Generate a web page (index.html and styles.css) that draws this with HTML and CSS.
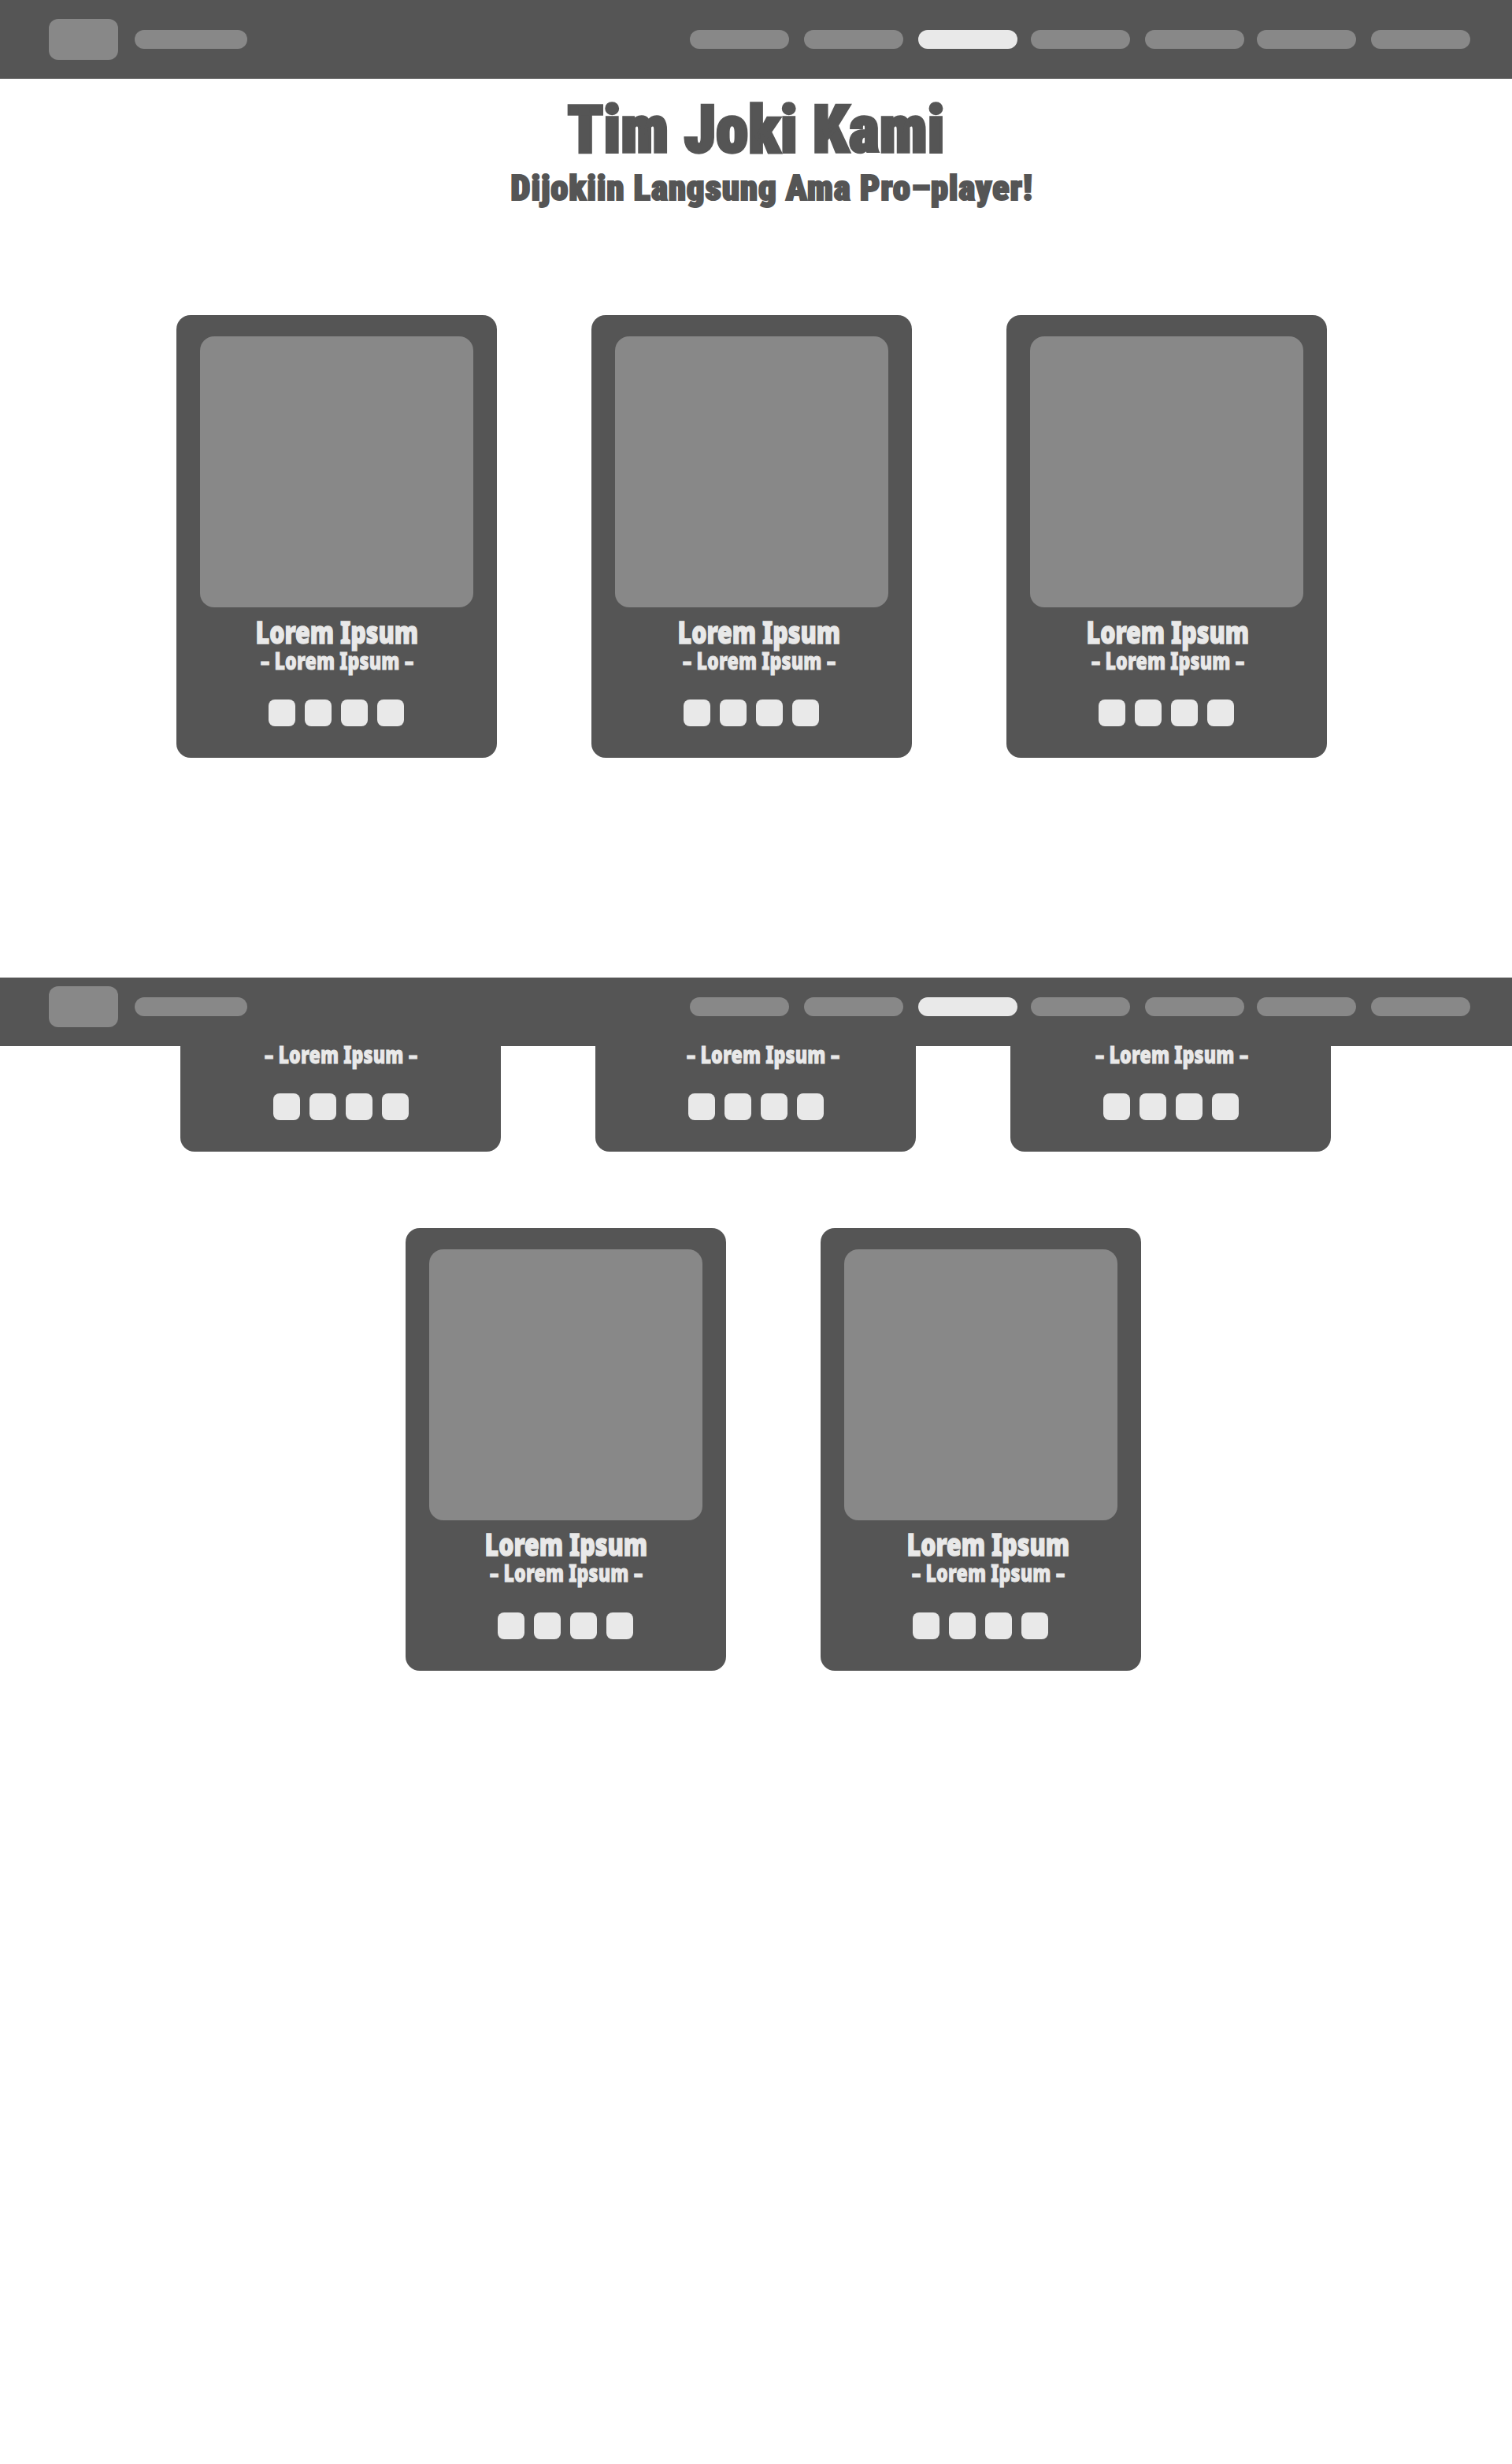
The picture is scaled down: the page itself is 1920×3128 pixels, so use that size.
FILE: index.html
```
<!DOCTYPE html>
<html lang="id">
<head>
<meta charset="utf-8">
<title>Tim Joki Kami</title>
<link rel="stylesheet" href="styles.css">
</head>
<body>
<header class="navbar">
  <div class="brand"><span class="logo"></span><span class="brand-name"></span></div>
  <nav class="menu">
    <a class="link"></a><a class="link"></a><a class="link active"></a><a class="link"></a><a class="link"></a><a class="link"></a><a class="link"></a>
  </nav>
</header>

<section class="intro">
  <h1 class="title">Tim Joki Kami</h1>
  <p class="subtitle">Dijokiin Langsung Ama Pro–player!</p>
</section>

<section class="team team-first">
  <article class="card">
    <div class="photo"></div>
    <h2 class="name"><span>Lorem Ipsum</span></h2>
    <p class="role"><span>– Lorem Ipsum –</span></p>
    <div class="socials"><i></i><i></i><i></i><i></i></div>
  </article>
  <article class="card shift-wide">
    <div class="photo"></div>
    <h2 class="name"><span>Lorem Ipsum</span></h2>
    <p class="role"><span>– Lorem Ipsum –</span></p>
    <div class="socials"><i></i><i></i><i></i><i></i></div>
  </article>
  <article class="card shift-slight">
    <div class="photo"></div>
    <h2 class="name"><span>Lorem Ipsum</span></h2>
    <p class="role"><span>– Lorem Ipsum –</span></p>
    <div class="socials"><i></i><i></i><i></i><i></i></div>
  </article>
</section>

<header class="navbar navbar-scrolled">
  <div class="brand"><span class="logo"></span><span class="brand-name"></span></div>
  <nav class="menu">
    <a class="link"></a><a class="link"></a><a class="link active"></a><a class="link"></a><a class="link"></a><a class="link"></a><a class="link"></a>
  </nav>
</header>

<section class="team team-scrolled">
  <article class="card card-cut">
    <p class="role"><span>– Lorem Ipsum –</span></p>
    <div class="socials"><i></i><i></i><i></i><i></i></div>
  </article>
  <article class="card card-cut shift-wide">
    <p class="role"><span>– Lorem Ipsum –</span></p>
    <div class="socials"><i></i><i></i><i></i><i></i></div>
  </article>
  <article class="card card-cut shift-slight">
    <p class="role"><span>– Lorem Ipsum –</span></p>
    <div class="socials"><i></i><i></i><i></i><i></i></div>
  </article>
</section>

<section class="team team-last">
  <article class="card">
    <div class="photo"></div>
    <h2 class="name"><span>Lorem Ipsum</span></h2>
    <p class="role"><span>– Lorem Ipsum –</span></p>
    <div class="socials"><i></i><i></i><i></i><i></i></div>
  </article>
  <article class="card shift-wide">
    <div class="photo"></div>
    <h2 class="name"><span>Lorem Ipsum</span></h2>
    <p class="role"><span>– Lorem Ipsum –</span></p>
    <div class="socials"><i></i><i></i><i></i><i></i></div>
  </article>
</section>
</body>
</html>
```
FILE: styles.css
```
* { box-sizing: border-box; }

body {
  margin: 0;
  min-height: 3128px;
  background: #fff;
  color: #555;
  font-family: Roboto, "Noto Sans", sans-serif;
}

h1, h2, p { margin: 0; }

/* Navigation bar */
.navbar {
  display: flex;
  justify-content: space-between;
  align-items: center;
  height: 100px;
  padding: 0 53px 0 62px;
  background: #555;
}
.brand { display: flex; align-items: center; gap: 21px; }
.logo { width: 88px; height: 52px; border-radius: 12px; background: #888; }
.brand-name { width: 143px; height: 24px; border-radius: 12px; background: #888; }
.menu { display: flex; gap: 19px; }
.link { width: 126px; height: 24px; border-radius: 12px; background: #888; }
.link:nth-child(4) { margin-left: -2px; }
.link:nth-child(6) { margin-left: -3px; }
.link.active { background: #e9e9e9; }

.navbar-scrolled {
  height: 87px;
  margin-top: 279px;
  padding-bottom: 13px;
}

/* Heading */
.intro { padding-top: 19px; text-align: center; white-space: nowrap; }
.title {
  font-size: 82.5px;
  font-weight: 900;
  font-stretch: 75%;
  line-height: 92px;
  letter-spacing: 0.2px;
  -webkit-text-stroke: 3.5px #555;
}
.subtitle {
  padding-left: 40px;
  font-size: 45px;
  font-weight: 900;
  font-stretch: 75%;
  line-height: 56px;
  letter-spacing: 0.8px;
  -webkit-text-stroke: 2px #555;
}

/* Team cards */
.team { display: flex; gap: 120px; }
.team-first { margin-top: 133px; padding-left: 224px; }
.team-scrolled { padding-left: 229px; }
.team-last { margin-top: 97px; padding-left: 515px; }

.card {
  --shift: 0px;
  width: 407px;
  height: 562px;
  padding: 27px 30px 0;
  border-radius: 18px;
  background: #555;
  color: #e9e9e9;
}
.shift-wide { --shift: 18px; }
.shift-slight { --shift: 2px; }
.photo { height: 344px; border-radius: 18px; background: #888; }
.name, .role {
  display: flex;
  justify-content: center;
  padding-left: var(--shift);
  font-family: "Noto Sans", sans-serif;
  font-weight: 900;
  white-space: nowrap;
}
.name span { transform: scaleX(0.79); }
.role span { transform: scaleX(0.785); }
.name {
  margin-top: 11px;
  font-size: 38.4px;
  line-height: 40px;
  -webkit-text-stroke: 1.4px #e9e9e9;
}
.role {
  margin-top: 1px;
  font-size: 29.4px;
  line-height: 32px;
  letter-spacing: 0.2px;
  -webkit-text-stroke: 1px #e9e9e9;
}
.socials { display: flex; gap: 12px; margin: 33px 0 0 87px; }
.socials i { width: 34px; height: 34px; border-radius: 8px; background: #e9e9e9; }

.team-last .name { margin-top: 10px; }
.team-last .socials { margin-top: 34px; }

.card-cut {
  display: flex;
  flex-direction: column;
  height: 134px;
  padding-top: 0;
  border-radius: 0 0 18px 18px;
}
.card-cut .role { margin-top: -5px; }
.card-cut .socials { margin-left: 88px; }
```
